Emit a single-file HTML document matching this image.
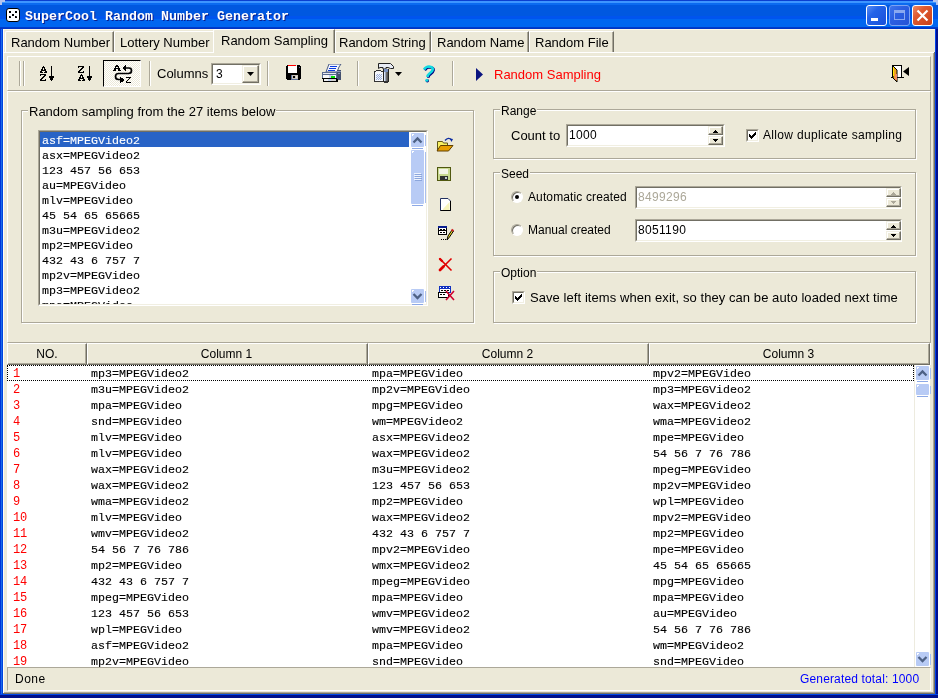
<!DOCTYPE html>
<html><head><meta charset="utf-8">
<style>
*{margin:0;padding:0;box-sizing:border-box}
html,body{width:938px;height:698px;overflow:hidden;background:#ECE9D8}
body{position:relative;font-family:"Liberation Sans",sans-serif;font-size:12px;color:#000}
.a{position:absolute}
.t{position:absolute;white-space:pre;line-height:14px;font-size:12px}
.m{position:absolute;-webkit-text-stroke:0.12px currentColor;white-space:pre;font-family:"Liberation Mono",monospace;font-size:11.67px;line-height:15px}
.hl{position:absolute;height:1px}
.vl{position:absolute;width:1px}
.gn{position:absolute;left:13px;margin-top:1px;white-space:pre;font-family:"Liberation Mono",monospace;font-size:12px;letter-spacing:-0.2px;line-height:16px;color:#F00}
.gm{position:absolute;margin-top:1px;-webkit-text-stroke:0.12px #000;white-space:pre;font-family:"Liberation Mono",monospace;font-size:11.67px;line-height:16px}
</style></head><body><div id="wrap" style="position:absolute;left:0;top:0;width:938px;height:698px;will-change:transform">

<!-- window frame -->
<div class="a" style="left:0;top:0;width:938px;height:698px;background:#0831D9"></div>
<div class="a" style="left:0;top:29px;width:3px;height:669px;background:linear-gradient(90deg,#0034D8 0,#0034D8 1px,#1A6BE8 1px,#1A6BE8 2px,#0044E0 2px)"></div>
<div class="a" style="left:935px;top:29px;width:3px;height:669px;background:linear-gradient(90deg,#0040E8 0,#0040E8 1px,#001090 1px)"></div>
<div class="a" style="left:0;top:694px;width:938px;height:4px;background:linear-gradient(180deg,#0048E8 0,#0048E8 1px,#00108A 1px)"></div>

<!-- title bar -->
<div class="a" style="left:0;top:0;width:938px;height:29px;border-radius:7px 7px 0 0;background:linear-gradient(180deg,#0A3FD0 0px,#0A3FD0 1px,#3D95FF 1px,#3D95FF 3px,#0A6AF0 3px,#0A6AF0 5px,#0058E0 5px,#0058E0 16px,#0054EE 16px,#0054EE 19px,#0066F0 19px,#0066F0 27px,#0040D0 27px,#0030C0 29px)"></div>
<!-- corner pixels -->
<div class="a" style="left:0;top:0;width:5px;height:2px;background:#B4C4EE"></div>
<div class="a" style="left:0;top:0;width:2px;height:5px;background:#B4C4EE"></div>
<div class="a" style="left:933px;top:0;width:5px;height:2px;background:#B4C4EE"></div>
<div class="a" style="left:936px;top:0;width:2px;height:5px;background:#B4C4EE"></div>

<!-- app icon (dice) -->
<div class="a" style="left:6px;top:8px;width:14px;height:14px;background:#fff;border:1px solid #000;border-radius:3px"></div>
<div class="a" style="left:9px;top:11px;width:2px;height:2px;background:#000"></div>
<div class="a" style="left:15px;top:11px;width:2px;height:2px;background:#000"></div>
<div class="a" style="left:12px;top:14px;width:2px;height:2px;background:#000"></div>
<div class="a" style="left:9px;top:16px;width:2px;height:2px;background:#000;border-top-right-radius:1px"></div>
<div class="a" style="left:15px;top:16px;width:2px;height:2px;background:#000;border-top-right-radius:1px"></div>

<div class="a" style="left:25px;top:8px;white-space:pre;font-family:'Liberation Mono',monospace;font-weight:bold;font-size:13.33px;line-height:18px;color:#fff;text-shadow:1px 1px 0 #0A1E8C">SuperCool Random Number Generator</div>

<!-- caption buttons -->
<div class="a" style="left:866px;top:5px;width:21px;height:21px;border:1px solid #fff;border-radius:3px;background:linear-gradient(135deg,#5A8DF5 0%,#2463E8 35%,#1B50DA 100%)"></div>
<div class="a" style="left:871px;top:18px;width:7px;height:3px;background:#fff"></div>
<div class="a" style="left:889px;top:5px;width:21px;height:21px;border:1px solid #7DA2F2;border-radius:3px;background:linear-gradient(135deg,#3F74EC 0%,#2C5FE2 40%,#2552D6 100%)"></div>
<div class="a" style="left:894px;top:10px;width:11px;height:10px;border:1px solid #8AA8F0;border-top-width:3px"></div>
<div class="a" style="left:912px;top:5px;width:21px;height:21px;border:1px solid #fff;border-radius:3px;background:linear-gradient(135deg,#EE8A66 0%,#E05A30 35%,#C8401A 100%)"></div>
<svg class="a" style="left:912px;top:5px" width="21" height="21"><path d="M5.5 5.5L15.5 15.5M15.5 5.5L5.5 15.5" stroke="#fff" stroke-width="2.2"/></svg>

<!-- client -->
<div class="a" style="left:3px;top:29px;width:932px;height:665px;background:#ECE9D8"></div>
<div class="hl" style="left:3px;top:29px;width:932px;background:#FFF8E8"></div>
<div class="vl" style="left:3px;top:29px;height:665px;background:#FFFDF4"></div>
<div class="vl" style="left:934px;top:52px;height:642px;background:#716F64"></div>
<div class="vl" style="left:933px;top:53px;height:640px;background:#ACA899"></div>
<div class="hl" style="left:3px;top:693px;width:932px;background:#716F64"></div>
<div class="hl" style="left:4px;top:692px;width:930px;background:#ACA899"></div>


<!-- tab strip -->
<div class="hl" style="left:3px;top:52px;width:931px;background:#fff"></div>
<!-- unselected tabs: left white, top white, right dark -->
<div class="a" style="left:5px;top:31px;width:109px;height:21px;border-left:1px solid #fff;border-top:1px solid #fff;border-right:1px solid #716F64;box-shadow:inset -1px 0 0 #ACA899;border-top-left-radius:2px"></div>
<div class="a" style="left:114px;top:31px;width:100px;height:21px;border-left:1px solid #fff;border-top:1px solid #fff;border-right:1px solid #F1EFE2;border-top-left-radius:2px"></div>
<div class="a" style="left:335px;top:31px;width:96px;height:21px;border-left:1px solid #fff;border-top:1px solid #fff;border-right:1px solid #716F64;box-shadow:inset -1px 0 0 #ACA899"></div>
<div class="a" style="left:431px;top:31px;width:98px;height:21px;border-left:1px solid #fff;border-top:1px solid #fff;border-right:1px solid #716F64;box-shadow:inset -1px 0 0 #ACA899"></div>
<div class="a" style="left:529px;top:31px;width:85px;height:21px;border-left:1px solid #fff;border-top:1px solid #fff;border-right:1px solid #716F64;box-shadow:inset -1px 0 0 #ACA899"></div>
<!-- selected tab -->
<div class="a" style="left:213px;top:29px;width:122px;height:24px;background:#ECE9D8;border-left:1px solid #fff;border-top:1px solid #fff;border-right:1px solid #716F64;box-shadow:inset -1px 0 0 #ACA899;border-top-left-radius:2px;border-bottom:0"></div>
<div class="t" style="left:11px;top:36px;font-size:13px">Random Number</div>
<div class="t" style="left:120px;top:36px;font-size:13px">Lottery Number</div>
<div class="t" style="left:221px;top:34px;font-size:13px">Random Sampling</div>
<div class="t" style="left:339px;top:36px;font-size:13px">Random String</div>
<div class="t" style="left:437px;top:36px;font-size:13px">Random Name</div>
<div class="t" style="left:535px;top:36px;font-size:13px">Random File</div>

<!-- toolbar panel -->
<div class="a" style="left:7px;top:56px;width:924px;height:35px;border-left:1px solid #fff;border-top:1px solid #fff;border-right:1px solid #ACA899;border-bottom:1px solid #ACA899"></div>
<div class="vl" style="left:19px;top:61px;height:25px;background:#ACA899"></div>
<div class="vl" style="left:20px;top:61px;height:25px;background:#fff"></div>
<div class="vl" style="left:23px;top:61px;height:25px;background:#ACA899"></div>
<div class="vl" style="left:24px;top:61px;height:25px;background:#fff"></div>
<!-- pressed button -->
<div class="a" style="left:103px;top:60px;width:38px;height:27px;border-left:1px solid #000;border-top:1px solid #000;border-right:1px solid #fff;border-bottom:1px solid #fff;background:#F4F2E8"></div>
<!-- separators -->
<div class="vl" style="left:149px;top:61px;height:25px;background:#ACA899"></div>
<div class="vl" style="left:150px;top:61px;height:25px;background:#fff"></div>
<div class="vl" style="left:267px;top:61px;height:25px;background:#ACA899"></div>
<div class="vl" style="left:268px;top:61px;height:25px;background:#fff"></div>
<div class="vl" style="left:357px;top:61px;height:25px;background:#ACA899"></div>
<div class="vl" style="left:358px;top:61px;height:25px;background:#fff"></div>
<div class="vl" style="left:452px;top:61px;height:25px;background:#ACA899"></div>
<div class="vl" style="left:453px;top:61px;height:25px;background:#fff"></div>
<div class="t" style="left:157px;top:67px;font-size:13px">Columns</div>
<!-- combo -->
<div class="a" style="left:211px;top:63px;width:50px;height:22px;border-left:1px solid #ACA899;border-top:1px solid #ACA899;border-right:1px solid #fff;border-bottom:1px solid #fff"></div>
<div class="a" style="left:212px;top:64px;width:48px;height:20px;border-left:1px solid #716F64;border-top:1px solid #716F64;border-right:1px solid #F1EFE2;border-bottom:1px solid #F1EFE2;background:#fff"></div>
<div class="t" style="left:216px;top:67px">3</div>
<div class="a" style="left:242px;top:65px;width:17px;height:18px;background:#ECE9D8;border-left:1px solid #F1EFE2;border-top:1px solid #F1EFE2;border-right:1px solid #716F64;border-bottom:1px solid #716F64;box-shadow:inset -1px -1px 0 #ACA899,inset 1px 1px 0 #fff"></div>
<svg class="a" style="left:243px;top:65px" width="16" height="17"><path d="M4 7h7l-3.5 4z" fill="#000"/></svg>
<div class="t" style="left:494px;top:68px;color:#F00;font-size:13px">Random Sampling</div>
<svg class="a" style="left:475px;top:67px" width="10" height="15"><path d="M1 1L8 7.5L1 14z" fill="#0A1480"/></svg>


<!-- second panel (settings) -->
<div class="a" style="left:7px;top:91px;width:924px;height:252px;border-left:1px solid #fff;border-top:1px solid #fff;border-right:1px solid #ACA899;border-bottom:1px solid #ACA899"></div>

<!-- group box 1 -->
<div class="a" style="left:21px;top:110px;width:453px;height:213px;border:1px solid #ACA899;box-shadow:inset 1px 1px 0 #fff, 1px 1px 0 #fff"></div>
<div class="t" style="left:28px;top:105px;background:#ECE9D8;padding:0 1px;font-size:13px">Random sampling from the 27 items below</div>

<!-- listbox -->
<div class="a" style="left:38px;top:130px;width:390px;height:176px;border-left:1px solid #ACA899;border-top:1px solid #ACA899;border-right:1px solid #fff;border-bottom:1px solid #fff"></div>
<div class="a" style="left:39px;top:131px;width:388px;height:174px;border-left:1px solid #716F64;border-top:1px solid #716F64;border-right:1px solid #F1EFE2;border-bottom:1px solid #F1EFE2;background:#fff;overflow:hidden"></div>
<div class="a" style="left:40px;top:132px;width:369px;height:172px;overflow:hidden">
<div style="position:relative;left:-40px;top:-132px">
<div class="a" style="left:40px;top:132px;width:369px;height:15px;background:#2863C6"></div><div class="m" style="left:42px;top:133.5px;color:#fff">asf=MPEGVideo2</div>
<div class="m" style="left:42px;top:148.5px">asx=MPEGVideo2</div>
<div class="m" style="left:42px;top:163.5px">123 457 56 653</div>
<div class="m" style="left:42px;top:178.5px">au=MPEGVideo</div>
<div class="m" style="left:42px;top:193.5px">mlv=MPEGVideo</div>
<div class="m" style="left:42px;top:208.5px">45 54 65 65665</div>
<div class="m" style="left:42px;top:223.5px">m3u=MPEGVideo2</div>
<div class="m" style="left:42px;top:238.5px">mp2=MPEGVideo</div>
<div class="m" style="left:42px;top:253.5px">432 43 6 757 7</div>
<div class="m" style="left:42px;top:268.5px">mp2v=MPEGVideo</div>
<div class="m" style="left:42px;top:283.5px">mp3=MPEGVideo2</div>
<div class="m" style="left:42px;top:298.5px">mpa=MPEGVideo</div>

</div></div>
<!-- list scrollbar -->
<div class="a" style="left:409px;top:132px;width:17px;height:172px;background:#fff"></div>
<div class="a" style="left:410px;top:132px;width:15px;height:16px;background:#fff;border-radius:2px"></div><div class="a" style="left:411px;top:133px;width:13px;height:14px;background:#B8CBF5;border-radius:1px"></div><div class="a" style="left:425px;top:135px;width:1px;height:11px;background:#A9BFEF"></div><div class="a" style="left:412px;top:148px;width:11px;height:1px;background:#8DA9E6"></div><div class="a" style="left:412px;top:134px;width:2px;height:1px;background:#fff"></div><div class="a" style="left:412px;top:135px;width:1px;height:1px;background:#fff"></div>
<svg class="a" style="left:0;top:0" width="938" height="698"><path d="M413.5 142.5L417.5 138.5L421.5 142.5" fill="none" stroke="#4D6185" stroke-width="2.3"/></svg>
<div class="a" style="left:410px;top:149px;width:15px;height:56px;background:#fff;border-radius:2px"></div><div class="a" style="left:411px;top:150px;width:13px;height:54px;background:#B8CBF5;border-radius:1px"></div><div class="a" style="left:425px;top:152px;width:1px;height:51px;background:#A9BFEF"></div><div class="a" style="left:412px;top:205px;width:11px;height:1px;background:#8DA9E6"></div><div class="a" style="left:412px;top:151px;width:2px;height:1px;background:#fff"></div><div class="a" style="left:412px;top:152px;width:1px;height:1px;background:#fff"></div>
<div class="a" style="left:414px;top:173px;width:7px;height:1px;background:#EEF3FE"></div><div class="a" style="left:415px;top:174px;width:7px;height:1px;background:#8CA6DC"></div><div class="a" style="left:414px;top:175px;width:7px;height:1px;background:#EEF3FE"></div><div class="a" style="left:415px;top:176px;width:7px;height:1px;background:#8CA6DC"></div><div class="a" style="left:414px;top:177px;width:7px;height:1px;background:#EEF3FE"></div><div class="a" style="left:415px;top:178px;width:7px;height:1px;background:#8CA6DC"></div><div class="a" style="left:414px;top:179px;width:7px;height:1px;background:#EEF3FE"></div><div class="a" style="left:415px;top:180px;width:7px;height:1px;background:#8CA6DC"></div>
<div class="a" style="left:410px;top:288px;width:15px;height:16px;background:#fff;border-radius:2px"></div><div class="a" style="left:411px;top:289px;width:13px;height:14px;background:#B8CBF5;border-radius:1px"></div><div class="a" style="left:425px;top:291px;width:1px;height:11px;background:#A9BFEF"></div><div class="a" style="left:412px;top:304px;width:11px;height:1px;background:#8DA9E6"></div><div class="a" style="left:412px;top:290px;width:2px;height:1px;background:#fff"></div><div class="a" style="left:412px;top:291px;width:1px;height:1px;background:#fff"></div>
<svg class="a" style="left:0;top:0" width="938" height="698"><path d="M413.5 294.0L417.5 298.0L421.5 294.0" fill="none" stroke="#4D6185" stroke-width="2.3"/></svg>

<!-- group: Range -->
<div class="a" style="left:493px;top:109px;width:423px;height:50px;border:1px solid #ACA899;box-shadow:inset 1px 1px 0 #fff, 1px 1px 0 #fff"></div>
<div class="t" style="left:500px;top:104px;background:#ECE9D8;padding:0 1px">Range</div>
<div class="t" style="left:511px;top:129px;font-size:13px">Count to</div>
<div class="a" style="left:566px;top:124px;width:159px;height:23px;border-left:1px solid #ACA899;border-top:1px solid #ACA899;border-right:1px solid #fff;border-bottom:1px solid #fff"></div>
<div class="a" style="left:567px;top:125px;width:157px;height:21px;border-left:1px solid #716F64;border-top:1px solid #716F64;border-right:1px solid #F1EFE2;border-bottom:1px solid #F1EFE2;background:#fff"></div>
<div class="t" style="left:569px;top:128px;letter-spacing:0.33px">1000</div>
<!-- checkbox allow dup -->
<div class="a" style="left:746px;top:129px;width:13px;height:13px;border-left:1px solid #ACA899;border-top:1px solid #ACA899;border-right:1px solid #fff;border-bottom:1px solid #fff"></div>
<div class="a" style="left:747px;top:130px;width:11px;height:11px;border-left:1px solid #716F64;border-top:1px solid #716F64;border-right:1px solid #F1EFE2;border-bottom:1px solid #F1EFE2;background:#fff"></div>
<svg class="a" style="left:746px;top:129px" width="13" height="13" shape-rendering="crispEdges"><g fill="#000"><rect x="9" y="3" width="1" height="1"/><rect x="8" y="4" width="2" height="1"/><rect x="3" y="5" width="1" height="1"/><rect x="7" y="5" width="3" height="1"/><rect x="3" y="6" width="2" height="1"/><rect x="6" y="6" width="3" height="1"/><rect x="3" y="7" width="5" height="1"/><rect x="4" y="8" width="3" height="1"/><rect x="5" y="9" width="1" height="1"/></g></svg>
<div class="t" style="left:763px;top:128px;letter-spacing:0.33px">Allow duplicate sampling</div>

<!-- group: Seed -->
<div class="a" style="left:493px;top:172px;width:423px;height:84px;border:1px solid #ACA899;box-shadow:inset 1px 1px 0 #fff, 1px 1px 0 #fff"></div>
<div class="t" style="left:500px;top:167px;background:#ECE9D8;padding:0 1px">Seed</div>
<div class="a" style="left:511px;top:191px;width:12px;height:12px;border-radius:50%;background:#fff;border:1px solid;border-color:#ACA899 #fff #fff #ACA899;box-shadow:inset 1px 1px 0 #716F64"></div>
<div class="a" style="left:515px;top:195px;width:4px;height:4px;border-radius:50%;background:#000"></div>
<div class="t" style="left:528px;top:190px;letter-spacing:0.12px">Automatic created</div>
<div class="a" style="left:635px;top:186px;width:267px;height:23px;border-left:1px solid #ACA899;border-top:1px solid #ACA899;border-right:1px solid #fff;border-bottom:1px solid #fff"></div>
<div class="a" style="left:636px;top:187px;width:265px;height:21px;border-left:1px solid #716F64;border-top:1px solid #716F64;border-right:1px solid #F1EFE2;border-bottom:1px solid #F1EFE2;background:#fff"></div>
<div class="t" style="left:638px;top:190px;color:#ACA899;letter-spacing:0.33px">8499296</div>

<div class="a" style="left:511px;top:224px;width:12px;height:12px;border-radius:50%;background:#fff;border:1px solid;border-color:#ACA899 #fff #fff #ACA899;box-shadow:inset 1px 1px 0 #716F64"></div>
<div class="t" style="left:528px;top:223px">Manual created</div>
<div class="a" style="left:635px;top:219px;width:267px;height:23px;border-left:1px solid #ACA899;border-top:1px solid #ACA899;border-right:1px solid #fff;border-bottom:1px solid #fff"></div>
<div class="a" style="left:636px;top:220px;width:265px;height:21px;border-left:1px solid #716F64;border-top:1px solid #716F64;border-right:1px solid #F1EFE2;border-bottom:1px solid #F1EFE2;background:#fff"></div>
<div class="t" style="left:638px;top:223px;letter-spacing:0.33px">8051190</div>

<div class="a" style="left:708px;top:126px;width:15px;height:9px;background:#ECE9D8;border-left:1px solid #F1EFE2;border-top:1px solid #F1EFE2;border-right:1px solid #716F64;border-bottom:1px solid #716F64;box-shadow:inset -1px -1px 0 #ACA899,inset 1px 1px 0 #fff"></div>
<div class="a" style="left:708px;top:136px;width:15px;height:9px;background:#ECE9D8;border-left:1px solid #F1EFE2;border-top:1px solid #F1EFE2;border-right:1px solid #716F64;border-bottom:1px solid #716F64;box-shadow:inset -1px -1px 0 #ACA899,inset 1px 1px 0 #fff"></div>
<svg class="a" style="left:0;top:0" width="938" height="260" shape-rendering="crispEdges"><g fill="#000"><rect x="715" y="130" width="1" height="1"/><rect x="714" y="131" width="3" height="1"/><rect x="713" y="132" width="5" height="1"/><rect x="713" y="139" width="5" height="1"/><rect x="714" y="140" width="3" height="1"/><rect x="715" y="141" width="1" height="1"/></g></svg>
<div class="a" style="left:886px;top:188px;width:15px;height:9px;background:#ECE9D8;border-left:1px solid #F1EFE2;border-top:1px solid #F1EFE2;border-right:1px solid #716F64;border-bottom:1px solid #716F64;box-shadow:inset -1px -1px 0 #ACA899,inset 1px 1px 0 #fff"></div>
<div class="a" style="left:886px;top:198px;width:15px;height:9px;background:#ECE9D8;border-left:1px solid #F1EFE2;border-top:1px solid #F1EFE2;border-right:1px solid #716F64;border-bottom:1px solid #716F64;box-shadow:inset -1px -1px 0 #ACA899,inset 1px 1px 0 #fff"></div>
<svg class="a" style="left:0;top:0" width="938" height="260" shape-rendering="crispEdges"><g fill="#ACA899"><rect x="893" y="192" width="1" height="1"/><rect x="892" y="193" width="3" height="1"/><rect x="891" y="194" width="5" height="1"/><rect x="891" y="201" width="5" height="1"/><rect x="892" y="202" width="3" height="1"/><rect x="893" y="203" width="1" height="1"/></g></svg>
<div class="a" style="left:886px;top:221px;width:15px;height:9px;background:#ECE9D8;border-left:1px solid #F1EFE2;border-top:1px solid #F1EFE2;border-right:1px solid #716F64;border-bottom:1px solid #716F64;box-shadow:inset -1px -1px 0 #ACA899,inset 1px 1px 0 #fff"></div>
<div class="a" style="left:886px;top:231px;width:15px;height:9px;background:#ECE9D8;border-left:1px solid #F1EFE2;border-top:1px solid #F1EFE2;border-right:1px solid #716F64;border-bottom:1px solid #716F64;box-shadow:inset -1px -1px 0 #ACA899,inset 1px 1px 0 #fff"></div>
<svg class="a" style="left:0;top:0" width="938" height="260" shape-rendering="crispEdges"><g fill="#000"><rect x="893" y="225" width="1" height="1"/><rect x="892" y="226" width="3" height="1"/><rect x="891" y="227" width="5" height="1"/><rect x="891" y="234" width="5" height="1"/><rect x="892" y="235" width="3" height="1"/><rect x="893" y="236" width="1" height="1"/></g></svg>
<!-- group: Option -->
<div class="a" style="left:493px;top:271px;width:423px;height:52px;border:1px solid #ACA899;box-shadow:inset 1px 1px 0 #fff, 1px 1px 0 #fff"></div>
<div class="t" style="left:500px;top:266px;background:#ECE9D8;padding:0 1px">Option</div>
<div class="a" style="left:512px;top:291px;width:13px;height:13px;border-left:1px solid #ACA899;border-top:1px solid #ACA899;border-right:1px solid #fff;border-bottom:1px solid #fff"></div>
<div class="a" style="left:513px;top:292px;width:11px;height:11px;border-left:1px solid #716F64;border-top:1px solid #716F64;border-right:1px solid #F1EFE2;border-bottom:1px solid #F1EFE2;background:#fff"></div>
<svg class="a" style="left:512px;top:291px" width="13" height="13" shape-rendering="crispEdges"><g fill="#000"><rect x="9" y="3" width="1" height="1"/><rect x="8" y="4" width="2" height="1"/><rect x="3" y="5" width="1" height="1"/><rect x="7" y="5" width="3" height="1"/><rect x="3" y="6" width="2" height="1"/><rect x="6" y="6" width="3" height="1"/><rect x="3" y="7" width="5" height="1"/><rect x="4" y="8" width="3" height="1"/><rect x="5" y="9" width="1" height="1"/></g></svg>
<div class="t" style="left:530px;top:291px;font-size:13px;letter-spacing:0.07px">Save left items when exit, so they can be auto loaded next time</div>


<!-- grid -->
<div class="a" style="left:7px;top:343px;width:923px;height:324px;background:#fff"></div>
<div class="vl" style="left:930px;top:343px;height:22px;background:#fff"></div>
<div class="a" style="left:7px;top:343px;width:80px;height:22px;background:#ECE9D8;border-left:1px solid #fff;border-top:1px solid #fff;border-right:1px solid #716F64;border-bottom:1px solid #716F64;box-shadow:inset -1px -1px 0 #ACA899"></div>
<div class="a" style="left:87px;top:343px;width:281px;height:22px;background:#ECE9D8;border-left:1px solid #fff;border-top:1px solid #fff;border-right:1px solid #716F64;border-bottom:1px solid #716F64;box-shadow:inset -1px -1px 0 #ACA899"></div>
<div class="a" style="left:368px;top:343px;width:281px;height:22px;background:#ECE9D8;border-left:1px solid #fff;border-top:1px solid #fff;border-right:1px solid #716F64;border-bottom:1px solid #716F64;box-shadow:inset -1px -1px 0 #ACA899"></div>
<div class="a" style="left:649px;top:343px;width:281px;height:22px;background:#ECE9D8;border-left:1px solid #fff;border-top:1px solid #fff;border-right:1px solid #716F64;border-bottom:1px solid #716F64;box-shadow:inset -1px -1px 0 #ACA899"></div>
<div class="t" style="left:7px;top:347px;width:80px;text-align:center">NO.</div>
<div class="t" style="left:86px;top:347px;width:281px;text-align:center">Column 1</div>
<div class="t" style="left:367px;top:347px;width:281px;text-align:center">Column 2</div>
<div class="t" style="left:648px;top:347px;width:281px;text-align:center">Column 3</div>
<div class="a" style="left:7px;top:365px;width:907px;height:302px;overflow:hidden">
<div style="position:relative;left:-7px;top:-365px">
<div class="gn" style="top:365px">1</div><div class="gm" style="left:91px;top:365px">mp3=MPEGVideo2</div><div class="gm" style="left:372px;top:365px">mpa=MPEGVideo</div><div class="gm" style="left:653px;top:365px">mpv2=MPEGVideo</div>
<div class="gn" style="top:381px">2</div><div class="gm" style="left:91px;top:381px">m3u=MPEGVideo2</div><div class="gm" style="left:372px;top:381px">mp2v=MPEGVideo</div><div class="gm" style="left:653px;top:381px">mp3=MPEGVideo2</div>
<div class="gn" style="top:397px">3</div><div class="gm" style="left:91px;top:397px">mpa=MPEGVideo</div><div class="gm" style="left:372px;top:397px">mpg=MPEGVideo</div><div class="gm" style="left:653px;top:397px">wax=MPEGVideo2</div>
<div class="gn" style="top:413px">4</div><div class="gm" style="left:91px;top:413px">snd=MPEGVideo</div><div class="gm" style="left:372px;top:413px">wm=MPEGVideo2</div><div class="gm" style="left:653px;top:413px">wma=MPEGVideo2</div>
<div class="gn" style="top:429px">5</div><div class="gm" style="left:91px;top:429px">mlv=MPEGVideo</div><div class="gm" style="left:372px;top:429px">asx=MPEGVideo2</div><div class="gm" style="left:653px;top:429px">mpe=MPEGVideo</div>
<div class="gn" style="top:445px">6</div><div class="gm" style="left:91px;top:445px">mlv=MPEGVideo</div><div class="gm" style="left:372px;top:445px">wax=MPEGVideo2</div><div class="gm" style="left:653px;top:445px">54 56 7 76 786</div>
<div class="gn" style="top:461px">7</div><div class="gm" style="left:91px;top:461px">wax=MPEGVideo2</div><div class="gm" style="left:372px;top:461px">m3u=MPEGVideo2</div><div class="gm" style="left:653px;top:461px">mpeg=MPEGVideo</div>
<div class="gn" style="top:477px">8</div><div class="gm" style="left:91px;top:477px">wax=MPEGVideo2</div><div class="gm" style="left:372px;top:477px">123 457 56 653</div><div class="gm" style="left:653px;top:477px">mp2v=MPEGVideo</div>
<div class="gn" style="top:493px">9</div><div class="gm" style="left:91px;top:493px">wma=MPEGVideo2</div><div class="gm" style="left:372px;top:493px">mp2=MPEGVideo</div><div class="gm" style="left:653px;top:493px">wpl=MPEGVideo</div>
<div class="gn" style="top:509px">10</div><div class="gm" style="left:91px;top:509px">mlv=MPEGVideo</div><div class="gm" style="left:372px;top:509px">wax=MPEGVideo2</div><div class="gm" style="left:653px;top:509px">mpv2=MPEGVideo</div>
<div class="gn" style="top:525px">11</div><div class="gm" style="left:91px;top:525px">wmv=MPEGVideo2</div><div class="gm" style="left:372px;top:525px">432 43 6 757 7</div><div class="gm" style="left:653px;top:525px">mp2=MPEGVideo</div>
<div class="gn" style="top:541px">12</div><div class="gm" style="left:91px;top:541px">54 56 7 76 786</div><div class="gm" style="left:372px;top:541px">mpv2=MPEGVideo</div><div class="gm" style="left:653px;top:541px">mpe=MPEGVideo</div>
<div class="gn" style="top:557px">13</div><div class="gm" style="left:91px;top:557px">mp2=MPEGVideo</div><div class="gm" style="left:372px;top:557px">wmx=MPEGVideo2</div><div class="gm" style="left:653px;top:557px">45 54 65 65665</div>
<div class="gn" style="top:573px">14</div><div class="gm" style="left:91px;top:573px">432 43 6 757 7</div><div class="gm" style="left:372px;top:573px">mpeg=MPEGVideo</div><div class="gm" style="left:653px;top:573px">mpg=MPEGVideo</div>
<div class="gn" style="top:589px">15</div><div class="gm" style="left:91px;top:589px">mpeg=MPEGVideo</div><div class="gm" style="left:372px;top:589px">mpa=MPEGVideo</div><div class="gm" style="left:653px;top:589px">mpa=MPEGVideo</div>
<div class="gn" style="top:605px">16</div><div class="gm" style="left:91px;top:605px">123 457 56 653</div><div class="gm" style="left:372px;top:605px">wmv=MPEGVideo2</div><div class="gm" style="left:653px;top:605px">au=MPEGVideo</div>
<div class="gn" style="top:621px">17</div><div class="gm" style="left:91px;top:621px">wpl=MPEGVideo</div><div class="gm" style="left:372px;top:621px">wmv=MPEGVideo2</div><div class="gm" style="left:653px;top:621px">54 56 7 76 786</div>
<div class="gn" style="top:637px">18</div><div class="gm" style="left:91px;top:637px">asf=MPEGVideo2</div><div class="gm" style="left:372px;top:637px">mpa=MPEGVideo</div><div class="gm" style="left:653px;top:637px">wm=MPEGVideo2</div>
<div class="gn" style="top:653px">19</div><div class="gm" style="left:91px;top:653px">mp2v=MPEGVideo</div><div class="gm" style="left:372px;top:653px">snd=MPEGVideo</div><div class="gm" style="left:653px;top:653px">snd=MPEGVideo</div>

</div></div>
<!-- focus rect row 1 -->
<div class="a" style="left:7px;top:365px;width:907px;height:16px;border:1px dotted #000"></div>
<!-- grid scrollbar -->
<div class="a" style="left:914px;top:365px;width:16px;height:302px;background:#fff;border-left:1px solid #EDEBDF"></div>
<div class="a" style="left:915px;top:365px;width:15px;height:16px;background:#fff;border-radius:2px"></div><div class="a" style="left:916px;top:366px;width:13px;height:14px;background:#B8CBF5;border-radius:1px"></div><div class="a" style="left:930px;top:368px;width:1px;height:11px;background:#A9BFEF"></div><div class="a" style="left:917px;top:381px;width:11px;height:1px;background:#8DA9E6"></div><div class="a" style="left:917px;top:367px;width:2px;height:1px;background:#fff"></div><div class="a" style="left:917px;top:368px;width:1px;height:1px;background:#fff"></div>
<svg class="a" style="left:0;top:0" width="938" height="698"><path d="M918.5 375.5L922.5 371.5L926.5 375.5" fill="none" stroke="#4D6185" stroke-width="2.3"/></svg>
<div class="a" style="left:915px;top:383px;width:15px;height:13px;background:#fff;border-radius:2px"></div><div class="a" style="left:916px;top:384px;width:13px;height:11px;background:#B8CBF5;border-radius:1px"></div><div class="a" style="left:930px;top:386px;width:1px;height:8px;background:#A9BFEF"></div><div class="a" style="left:917px;top:396px;width:11px;height:1px;background:#8DA9E6"></div><div class="a" style="left:917px;top:385px;width:2px;height:1px;background:#fff"></div><div class="a" style="left:917px;top:386px;width:1px;height:1px;background:#fff"></div>
<div class="a" style="left:915px;top:651px;width:15px;height:16px;background:#fff;border-radius:2px"></div><div class="a" style="left:916px;top:652px;width:13px;height:14px;background:#B8CBF5;border-radius:1px"></div><div class="a" style="left:930px;top:654px;width:1px;height:11px;background:#A9BFEF"></div><div class="a" style="left:917px;top:667px;width:11px;height:1px;background:#8DA9E6"></div><div class="a" style="left:917px;top:653px;width:2px;height:1px;background:#fff"></div><div class="a" style="left:917px;top:654px;width:1px;height:1px;background:#fff"></div>
<svg class="a" style="left:0;top:0" width="938" height="698"><path d="M918.5 657.0L922.5 661.0L926.5 657.0" fill="none" stroke="#4D6185" stroke-width="2.3"/></svg>

<!-- status bar -->
<div class="a" style="left:7px;top:667px;width:924px;height:24px;border-left:1px solid #ACA899;border-top:1px solid #ACA899;border-right:1px solid #fff;border-bottom:1px solid #fff;background:#ECE9D8"></div>
<div class="t" style="left:15px;top:672px;letter-spacing:0.5px">Done</div>
<div class="t" style="left:800px;top:672px;color:#0000FF;letter-spacing:0.15px">Generated total: 1000</div>

<svg class="a" style="left:0;top:0" width="938" height="100" shape-rendering="crispEdges"><rect x="43" y="66" width="1" height="1" fill="#000"/><rect x="42" y="67" width="3" height="1" fill="#000"/><rect x="42" y="68" width="1" height="1" fill="#000"/><rect x="44" y="68" width="1" height="1" fill="#000"/><rect x="41" y="69" width="2" height="1" fill="#000"/><rect x="44" y="69" width="2" height="1" fill="#000"/><rect x="41" y="70" width="5" height="1" fill="#000"/><rect x="40" y="71" width="2" height="1" fill="#000"/><rect x="45" y="71" width="2" height="1" fill="#000"/><rect x="40" y="72" width="3" height="1" fill="#000"/><rect x="44" y="72" width="3" height="1" fill="#000"/><rect x="40" y="74" width="6" height="1" fill="#000"/><rect x="40" y="75" width="1" height="1" fill="#000"/><rect x="44" y="75" width="2" height="1" fill="#000"/><rect x="43" y="76" width="2" height="1" fill="#000"/><rect x="42" y="77" width="2" height="1" fill="#000"/><rect x="41" y="78" width="2" height="1" fill="#000"/><rect x="40" y="79" width="2" height="1" fill="#000"/><rect x="45" y="79" width="1" height="1" fill="#000"/><rect x="40" y="80" width="6" height="1" fill="#000"/><rect x="51" y="66" width="1" height="1" fill="#000"/><rect x="51" y="67" width="1" height="1" fill="#000"/><rect x="51" y="68" width="1" height="1" fill="#000"/><rect x="51" y="69" width="1" height="1" fill="#000"/><rect x="51" y="70" width="1" height="1" fill="#000"/><rect x="51" y="71" width="1" height="1" fill="#000"/><rect x="51" y="72" width="1" height="1" fill="#000"/><rect x="51" y="73" width="1" height="1" fill="#000"/><rect x="51" y="74" width="1" height="1" fill="#000"/><rect x="51" y="75" width="1" height="1" fill="#000"/><rect x="49" y="76" width="5" height="1" fill="#000"/><rect x="49" y="77" width="5" height="1" fill="#000"/><rect x="50" y="78" width="3" height="1" fill="#000"/><rect x="50" y="79" width="3" height="1" fill="#000"/><rect x="51" y="80" width="1" height="1" fill="#000"/><rect x="78" y="66" width="6" height="1" fill="#000"/><rect x="78" y="67" width="1" height="1" fill="#000"/><rect x="82" y="67" width="2" height="1" fill="#000"/><rect x="81" y="68" width="2" height="1" fill="#000"/><rect x="80" y="69" width="2" height="1" fill="#000"/><rect x="79" y="70" width="2" height="1" fill="#000"/><rect x="78" y="71" width="2" height="1" fill="#000"/><rect x="83" y="71" width="1" height="1" fill="#000"/><rect x="78" y="72" width="6" height="1" fill="#000"/><rect x="81" y="74" width="1" height="1" fill="#000"/><rect x="80" y="75" width="3" height="1" fill="#000"/><rect x="80" y="76" width="1" height="1" fill="#000"/><rect x="82" y="76" width="1" height="1" fill="#000"/><rect x="79" y="77" width="2" height="1" fill="#000"/><rect x="82" y="77" width="2" height="1" fill="#000"/><rect x="79" y="78" width="5" height="1" fill="#000"/><rect x="78" y="79" width="2" height="1" fill="#000"/><rect x="83" y="79" width="2" height="1" fill="#000"/><rect x="78" y="80" width="3" height="1" fill="#000"/><rect x="82" y="80" width="3" height="1" fill="#000"/><rect x="89" y="66" width="1" height="1" fill="#000"/><rect x="89" y="67" width="1" height="1" fill="#000"/><rect x="89" y="68" width="1" height="1" fill="#000"/><rect x="89" y="69" width="1" height="1" fill="#000"/><rect x="89" y="70" width="1" height="1" fill="#000"/><rect x="89" y="71" width="1" height="1" fill="#000"/><rect x="89" y="72" width="1" height="1" fill="#000"/><rect x="89" y="73" width="1" height="1" fill="#000"/><rect x="89" y="74" width="1" height="1" fill="#000"/><rect x="89" y="75" width="1" height="1" fill="#000"/><rect x="87" y="76" width="5" height="1" fill="#000"/><rect x="87" y="77" width="5" height="1" fill="#000"/><rect x="88" y="78" width="3" height="1" fill="#000"/><rect x="88" y="79" width="3" height="1" fill="#000"/><rect x="89" y="80" width="1" height="1" fill="#000"/><rect x="287" y="65" width="9" height="1" fill="#FF0000"/><rect x="286" y="66" width="2" height="1" fill="#000"/><rect x="288" y="66" width="9" height="1" fill="#FFFFFF"/><rect x="297" y="66" width="4" height="1" fill="#000"/><rect x="286" y="67" width="2" height="1" fill="#000"/><rect x="288" y="67" width="9" height="1" fill="#FFFFFF"/><rect x="297" y="67" width="2" height="1" fill="#000"/><rect x="299" y="67" width="1" height="1" fill="#5A6E9A"/><rect x="300" y="67" width="1" height="1" fill="#000"/><rect x="286" y="68" width="2" height="1" fill="#000"/><rect x="288" y="68" width="9" height="1" fill="#FFFFFF"/><rect x="297" y="68" width="4" height="1" fill="#000"/><rect x="286" y="69" width="2" height="1" fill="#000"/><rect x="288" y="69" width="9" height="1" fill="#FFFFFF"/><rect x="297" y="69" width="4" height="1" fill="#000"/><rect x="286" y="70" width="2" height="1" fill="#000"/><rect x="288" y="70" width="9" height="1" fill="#FFFFFF"/><rect x="297" y="70" width="4" height="1" fill="#000"/><rect x="286" y="71" width="2" height="1" fill="#000"/><rect x="288" y="71" width="9" height="1" fill="#FFFFFF"/><rect x="297" y="71" width="4" height="1" fill="#000"/><rect x="286" y="72" width="2" height="1" fill="#000"/><rect x="288" y="72" width="9" height="1" fill="#FFFFFF"/><rect x="297" y="72" width="4" height="1" fill="#000"/><rect x="286" y="73" width="15" height="1" fill="#000"/><rect x="286" y="74" width="15" height="1" fill="#000"/><rect x="286" y="75" width="5" height="1" fill="#000"/><rect x="291" y="75" width="1" height="1" fill="#5A6E9A"/><rect x="292" y="75" width="6" height="1" fill="#C8C4BC"/><rect x="298" y="75" width="3" height="1" fill="#000"/><rect x="286" y="76" width="5" height="1" fill="#000"/><rect x="291" y="76" width="1" height="1" fill="#5A6E9A"/><rect x="292" y="76" width="1" height="1" fill="#C8C4BC"/><rect x="293" y="76" width="2" height="1" fill="#000"/><rect x="295" y="76" width="1" height="1" fill="#C8C4BC"/><rect x="296" y="76" width="1" height="1" fill="#E8E6E0"/><rect x="297" y="76" width="1" height="1" fill="#C8C4BC"/><rect x="298" y="76" width="3" height="1" fill="#000"/><rect x="286" y="77" width="5" height="1" fill="#000"/><rect x="291" y="77" width="1" height="1" fill="#5A6E9A"/><rect x="292" y="77" width="1" height="1" fill="#C8C4BC"/><rect x="293" y="77" width="2" height="1" fill="#000"/><rect x="295" y="77" width="1" height="1" fill="#C8C4BC"/><rect x="296" y="77" width="1" height="1" fill="#E8E6E0"/><rect x="297" y="77" width="1" height="1" fill="#C8C4BC"/><rect x="298" y="77" width="3" height="1" fill="#000"/><rect x="286" y="78" width="5" height="1" fill="#000"/><rect x="291" y="78" width="1" height="1" fill="#5A6E9A"/><rect x="292" y="78" width="6" height="1" fill="#C8C4BC"/><rect x="298" y="78" width="3" height="1" fill="#000"/><rect x="287" y="79" width="4" height="1" fill="#000"/><rect x="291" y="79" width="7" height="1" fill="#5A6E9A"/><rect x="298" y="79" width="2" height="1" fill="#000"/><rect x="287" y="65" width="1" height="1" fill="#000"/><rect x="297" y="65" width="3" height="1" fill="#000"/></svg>

<!-- swap icon -->
<svg class="a" style="left:104px;top:61px" width="36" height="25">
<defs><pattern id="dith" width="2" height="2" patternUnits="userSpaceOnUse"><rect width="2" height="2" fill="#ECE9D8"/><rect width="1" height="1" fill="#fff"/><rect x="1" y="1" width="1" height="1" fill="#fff"/></pattern></defs>
<rect width="36" height="25" fill="url(#dith)"/>
<g shape-rendering="crispEdges" fill="#000">
<rect x="12" y="4" width="2" height="1"/><rect x="11" y="5" width="4" height="1"/><rect x="11" y="6" width="1" height="1"/><rect x="14" y="6" width="1" height="1"/><rect x="10" y="7" width="6" height="1"/><rect x="10" y="8" width="2" height="1"/><rect x="14" y="8" width="2" height="1"/><rect x="9" y="9" width="3" height="1"/><rect x="14" y="9" width="3" height="1"/>
<rect x="22" y="16" width="5" height="1"/><rect x="25" y="17" width="1" height="1"/><rect x="24" y="18" width="1" height="1"/><rect x="23" y="19" width="1" height="1"/><rect x="22" y="20" width="1" height="1"/><rect x="22" y="21" width="5" height="1"/>
<rect x="19" y="6" width="1" height="2"/><rect x="20" y="5" width="1" height="4"/><rect x="21" y="4" width="1" height="6"/>
<rect x="17" y="17" width="1" height="4"/><rect x="18" y="17" width="1" height="4"/><rect x="19" y="18" width="1" height="2"/><rect x="16" y="16" width="1" height="6"/>
</g>
<path d="M21 7H25Q27.5 7 27.5 9.5Q27.5 12.5 24.5 12.5H14.5Q11.5 12.5 11.5 15.5Q11.5 18.5 14.5 18.5H17" fill="none" stroke="#000" stroke-width="1.7"/>
</svg>
<!-- printer -->
<svg class="a" style="left:322px;top:64px" width="20" height="18" shape-rendering="crispEdges">
<path d="M7 0H19L17 3L15 8H4z" fill="#F4F6FF" stroke="#4A5A80" stroke-width="1" shape-rendering="auto"/>
<rect x="8" y="2" width="7" height="1" fill="#0A3AE0"/><rect x="7" y="4" width="7" height="1" fill="#0A3AE0"/><rect x="6" y="6" width="7" height="1" fill="#0A3AE0"/>
<rect x="0" y="8" width="15" height="2" fill="#5A6A90"/><rect x="1" y="9" width="13" height="1" fill="#E8EAF0"/>
<rect x="15" y="6" width="4" height="10" fill="#44506E"/><rect x="15" y="7" width="4" height="1" fill="#8898B8"/><rect x="16" y="9" width="2" height="1" fill="#8898B8"/>
<rect x="0" y="10" width="15" height="5" fill="#5A6A90"/><rect x="1" y="11" width="13" height="3" fill="#F8F8F8"/><rect x="7" y="11" width="4" height="3" fill="#C8D4F0"/><rect x="9" y="12" width="4" height="2" fill="#00E000"/>
<rect x="0" y="14" width="15" height="1" fill="#000"/>
<rect x="1" y="15" width="15" height="3" fill="#000"/><rect x="2" y="15" width="12" height="2" fill="#F0F0F0"/><rect x="6" y="15" width="3" height="2" fill="#C4D4F0"/><rect x="9" y="15" width="5" height="2" fill="#D0D0D0"/>
</svg>
<!-- tools -->
<svg class="a" style="left:373px;top:62px" width="32" height="22" shape-rendering="crispEdges">
<path d="M5.5 1.5H17.5L20.5 4.5V6.5H17.5L15 5.5H13V7H10V5.5H7L5.5 6.5z" fill="#E8ECF4" stroke="#222" stroke-width="1" shape-rendering="auto"/>
<rect x="11" y="7" width="4" height="13" fill="#5A5A5A"/><rect x="11" y="7" width="1" height="13" fill="#D8E4F8"/><rect x="12" y="7" width="1" height="13" fill="#9AA4B8"/><rect x="13" y="7" width="1" height="13" fill="#707070"/><rect x="11" y="7" width="4" height="3" fill="#7890C0"/><rect x="10" y="7" width="1" height="13" fill="#222"/><rect x="15" y="7" width="1" height="13" fill="#222"/><rect x="11" y="19" width="4" height="2" fill="#333"/>
<rect x="1" y="9" width="9" height="11" fill="#333"/><rect x="2" y="10" width="8" height="9" fill="#F6F8FC"/><rect x="3" y="12" width="6" height="6" fill="url(#dith2)"/><defs><pattern id="dith2" width="2" height="2" patternUnits="userSpaceOnUse"><rect width="2" height="2" fill="#F0F4FC"/><rect width="1" height="1" fill="#9AAEDA"/><rect x="1" y="1" width="1" height="1" fill="#9AAEDA"/></pattern></defs><rect x="3" y="9" width="5" height="1" fill="#F0F0F0"/><rect x="3" y="8" width="5" height="1" fill="#333"/>
<path d="M22 10H29L25.5 14z" fill="#000" shape-rendering="auto"/>
</svg>
<!-- help -->
<svg class="a" style="left:419px;top:64px" width="18" height="20">
<path d="M5 5.5Q7 2.5 10 2.5Q14 2.8 13.8 5.5Q13.5 7.5 10.5 9.5Q8.5 11 8.5 13" fill="none" stroke="#000080" stroke-width="2.6" transform="translate(0.8,0.8)"/>
<path d="M5 5.5Q7 2.5 10 2.5Q14 2.8 13.8 5.5Q13.5 7.5 10.5 9.5Q8.5 11 8.5 13" fill="none" stroke="#10D8E0" stroke-width="2.6"/>
<circle cx="8.3" cy="16.8" r="1.7" fill="#000080"/><circle cx="7.8" cy="16.3" r="1.5" fill="#10D8E0"/>
</svg>
<!-- exit door -->
<svg class="a" style="left:890px;top:64px" width="22" height="20" shape-rendering="crispEdges">
<rect x="2" y="1" width="10" height="1" fill="#000"/><rect x="2" y="1" width="1" height="13" fill="#000"/><rect x="11" y="1" width="1" height="13" fill="#000"/><rect x="1" y="13" width="13" height="1" fill="#000"/>
<rect x="3" y="2" width="8" height="11" fill="#fff"/>
<path d="M3 2L7 6V18L3 14z" fill="#F0A020" stroke="#000" stroke-width="1" shape-rendering="auto"/>
<rect x="3" y="3" width="1" height="9" fill="#FFE800"/>
<rect x="5" y="10" width="2" height="6" fill="#F08860"/>
<path d="M13 7.5L19 3V12z" fill="#000" shape-rendering="auto"/>
</svg>
<!-- side icons -->
<svg class="a" style="left:436px;top:136px" width="20" height="170">
<!-- open folder -->
<path d="M9 4.5Q12.5 0.5 15.5 4" fill="none" stroke="#0A2AA0" stroke-width="1.4"/><path d="M14 2.5L17 3L15.5 6z" fill="#0A2AA0"/>
<path d="M1.5 5.5H6.5L7.5 7H11.5V14.5H1.5z" fill="#F8F060" stroke="#605818" stroke-width="1"/>
<path d="M4.5 9.5H17L12.5 15H1z" fill="#E8A000" stroke="#604000" stroke-width="1"/>
<!-- save yellow -->
<rect x="1.5" y="31.5" width="13" height="13" fill="#C8D890" stroke="#505810"/>
<rect x="3" y="33" width="9" height="5" fill="#F4F4E8"/><rect x="4" y="40" width="8" height="4" fill="#303030"/><rect x="9" y="41" width="2" height="2" fill="#C0C8D0"/>
<!-- new doc -->
<path d="M4.5 62.5H12L14.5 65V74.5H4.5z" fill="#fff" stroke="#223060"/>
<path d="M7 73L13.5 66V74H7z" fill="#F4F0A0" opacity="0.7"/>
<path d="M4.5 74.5H14.5V65" fill="none" stroke="#000"/>
<!-- edit -->
<rect x="2.5" y="90.5" width="8" height="8" fill="#fff" stroke="#000"/><rect x="2" y="90" width="9" height="2" fill="#0A1E90"/>
<rect x="4" y="93" width="2" height="1" fill="#000"/><rect x="7" y="93" width="2" height="1" fill="#000"/><rect x="4" y="96" width="2" height="1" fill="#000"/><rect x="7" y="96" width="2" height="1" fill="#000"/><rect x="3" y="94" width="7" height="1" fill="#000"/>
<rect x="5" y="103" width="1" height="1" fill="#000"/><rect x="7" y="103" width="1" height="1" fill="#000"/><rect x="9" y="103" width="1" height="1" fill="#000"/>
<path d="M11 104L12 100L16 94L17.5 95L13.5 101z" fill="#F0E020" stroke="#000" stroke-width="1"/><path d="M15.5 93.5L17.5 95" stroke="#D02020" stroke-width="2"/>
<!-- red X -->
<path d="M3.5 122.5L15.5 134.5" stroke="#E00000" stroke-width="1.6"/><path d="M15.5 122.5L4 134" stroke="#E00000" stroke-width="1.6"/><path d="M4 134L7.5 130.5" stroke="#E00000" stroke-width="2.8" stroke-linecap="round"/><path d="M4 123L6 125" stroke="#E00000" stroke-width="2.4" stroke-linecap="round"/>
<!-- clear grid -->
<rect x="3" y="150" width="12" height="7" fill="#1030C0"/><rect x="4" y="151" width="1" height="1" fill="#fff"/><rect x="7" y="151" width="1" height="1" fill="#fff"/><rect x="10" y="151" width="1" height="1" fill="#fff"/><rect x="13" y="151" width="1" height="1" fill="#fff"/>
<rect x="4" y="153" width="10" height="3" fill="#fff"/><rect x="5" y="154" width="2" height="1" fill="#000"/><rect x="8" y="154" width="2" height="1" fill="#000"/><rect x="11" y="154" width="2" height="1" fill="#000"/>
<rect x="2.5" y="156.5" width="10" height="5" fill="#fff" stroke="#000"/><rect x="4" y="158" width="2" height="1" fill="#000"/><rect x="7" y="158" width="2" height="1" fill="#000"/>
<path d="M10 155L18 164M18 155L10 164" stroke="#D00030" stroke-width="1.6"/>
</svg>

</div></body></html>
